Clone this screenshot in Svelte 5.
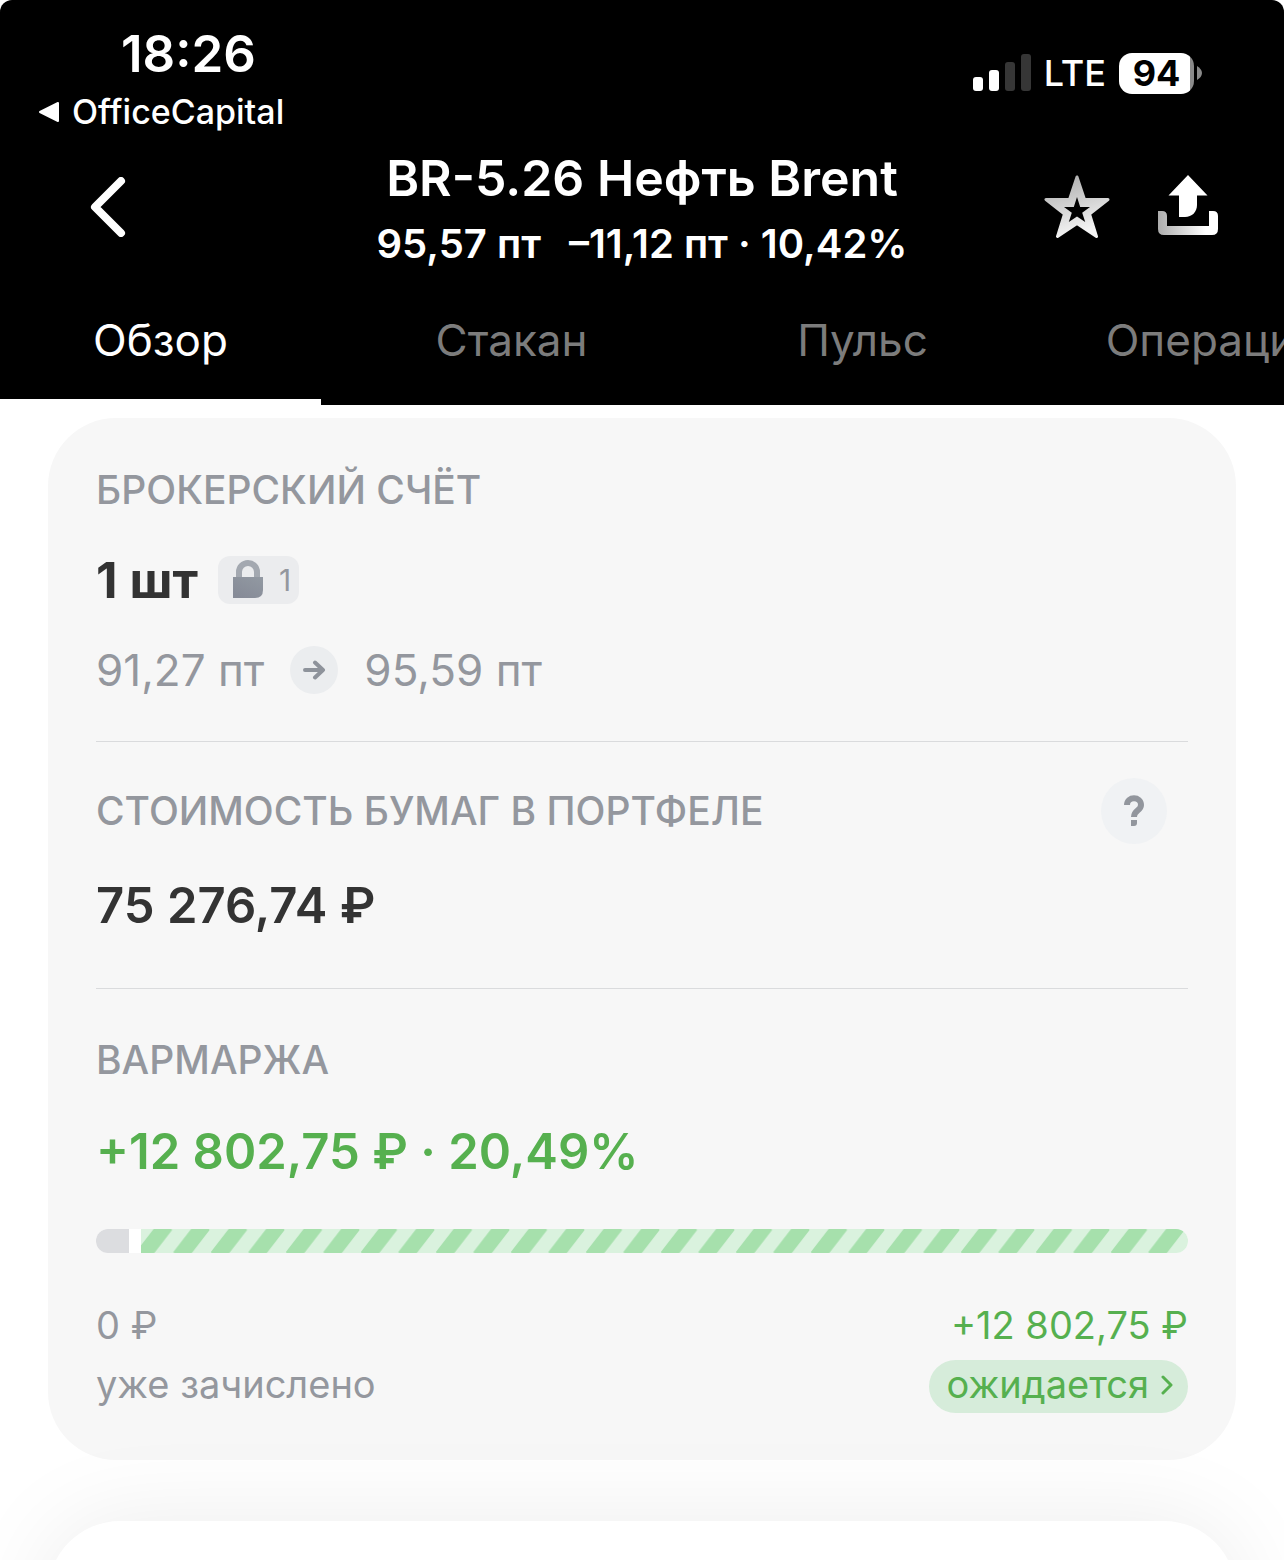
<script>
	let tabs = ["Обзор", "Стакан", "Пульс", "Операции"]
	let active = "Обзор"
	let favorite = false

	const position = {
		count: "1 шт",
		locked: 1,
		from: "91,27 пт",
		to: "95,59 пт",
		total: "75 276,74 ₽",
		margin: "+12 802,75 ₽ · 20,49%",
		credited: "0 ₽",
		expected: "+12 802,75 ₽",
		creditedShare: 3
	}
</script>

<div class="screen">
	<header>
		<div class="status">
			<div class="status-left">
				<div class="time">18:26</div>
				<a class="back-app" href="#app">
					<svg width="22" height="22" viewBox="0 0 22 22">
						<path d="M2 11 L20 2 V20 Z" fill="#fff" stroke="#fff" stroke-width="2" stroke-linejoin="round" />
					</svg>
					OfficeCapital
				</a>
			</div>
			<div class="status-right">
				<svg width="58" height="38" viewBox="0 0 58 38">
					<rect x="0" y="23" width="10" height="14" rx="3" fill="#fff" />
					<rect x="16" y="16" width="10" height="21" rx="3" fill="#fff" />
					<rect x="32" y="8" width="10" height="29" rx="3" fill="#363636" />
					<rect x="48" y="0" width="10" height="37" rx="3" fill="#363636" />
				</svg>
				<span class="lte">LTE</span>
				<div class="battery">
					<span class="level">94</span>
					<svg width="5" height="14" viewBox="0 0 5 14">
						<path d="M0 0 C3 2 5 4 5 7 C5 10 3 12 0 14 Z" fill="#8a8a8a" />
					</svg>
				</div>
			</div>
		</div>

		<div class="nav">
			<button class="icon-btn back" aria-label="Назад">
				<svg width="36" height="60" viewBox="0 0 36 60">
					<path d="M31 4 L5 30 L31 56" fill="none" stroke="#fff" stroke-width="8" stroke-linecap="round" stroke-linejoin="round" />
				</svg>
			</button>
			<div class="heading">
				<h1>BR-5.26 Нефть Brent</h1>
				<p><span>95,57 пт</span><span>–11,12 пт · 10,42%</span></p>
			</div>
			<div class="actions">
				<button class="icon-btn" aria-label="В избранное" aria-pressed={favorite} on:click={() => (favorite = !favorite)}>
					<svg width="66" height="64" viewBox="0 0 66 64">
						<defs>
							<linearGradient id="star" x1="0" y1="0" x2="0.3" y2="1">
								<stop offset="0" stop-color="#aaa" />
								<stop offset="1" stop-color="#f4f4f4" />
							</linearGradient>
						</defs>
						<path d="M33 2 L40.5 24.500 H64 L45.500 39 L52.500 61.500 L33 48.500 L13.500 61.500 L20.500 39 L2 24.500 H25.500 Z" fill="url(#star)" stroke="url(#star)" stroke-width="3" stroke-linejoin="round" />
						<path d="M33 22 L36.200 32 H46 L38.200 37.800 L41.200 47 L33 41.500 L24.800 47 L27.800 37.800 L20 32 H29.800 Z" fill="#000" />
					</svg>
				</button>
				<button class="icon-btn" aria-label="Поделиться">
					<svg width="60" height="60" viewBox="0 0 60 60">
						<defs>
							<linearGradient id="tray" x1="0" y1="0" x2="1" y2="0">
								<stop offset="0" stop-color="#adadad" />
								<stop offset="0.800" stop-color="#fff" />
							</linearGradient>
						</defs>
						<path d="M30 0 L49.500 20.500 H39 V30 C39 37 34 42 27 42 H21 V20.500 H10.500 Z" fill="#fff" />
						<path d="M0 36 H4 Q9 36 9 41 V51 H51 V36 H55 Q60 36 60 41 V54 Q60 60 54 60 H6 Q0 60 0 54 Z" fill="url(#tray)" />
					</svg>
				</button>
			</div>
		</div>

		<nav class="tabs">
			{#each tabs as tab}
				<button class:active={tab === active} on:click={() => (active = tab)}>{tab}</button>
			{/each}
		</nav>
	</header>

	<main>
		<div class="card">
			<section>
				<h2>БРОКЕРСКИЙ СЧЁТ</h2>
				<div class="count">
					<strong>{position.count}</strong>
					<span class="lock">
						<svg width="30" height="40" viewBox="0 0 30 40">
							<defs>
								<linearGradient id="lock" x1="1" y1="0" x2="0.300" y2="1">
									<stop offset="0" stop-color="#9299a2" />
									<stop offset="1" stop-color="#868b97" />
								</linearGradient>
							</defs>
							<path d="M6 19 V12 A9 9 0 0 1 24 12 V19" fill="none" stroke="#a3a8b0" stroke-width="6" />
							<path d="M0 17 H30 V30 Q30 38 22 38 H0 Z" fill="url(#lock)" />
						</svg>
						{position.locked}
					</span>
				</div>
				<div class="prices">
					<span>{position.from}</span>
					<span class="arrow">
						<svg width="24" height="20" viewBox="0 0 24 20">
							<path d="M3 10 H20 M13 2.500 L21 10 L13 17.500" fill="none" stroke="#8e939b" stroke-width="4" stroke-linecap="round" stroke-linejoin="round" />
						</svg>
					</span>
					<span>{position.to}</span>
				</div>
			</section>

			<section class="value">
				<div class="title-row">
					<h2>СТОИМОСТЬ БУМАГ В ПОРТФЕЛЕ</h2>
					<button class="help" aria-label="Справка">
						<svg width="20" height="32" viewBox="0 0 20 32">
							<path d="M3 10 C3 1 17 1 17 10 C17 16 10 15 10 22" fill="none" stroke="#92969d" stroke-width="6" />
							<path d="M7 25 H13 V28 Q13 31 10 31 H7 Z" fill="#92969d" />
						</svg>
					</button>
				</div>
				<div class="sum">{position.total}</div>
			</section>

			<section class="margin">
				<h2>ВАРМАРЖА</h2>
				<div class="sum green">{position.margin}</div>
				<div class="bar">
					<div class="credited" style="width: {position.creditedShare}%"></div>
					<svg class="expected" height="24">
						<defs>
							<pattern id="stripes" x="-5" width="37.500" height="24" patternUnits="userSpaceOnUse">
								<path d="M1 23 L18 1 H35 L18 23 Z" fill="#a6e0ac" stroke="#a6e0ac" stroke-width="2" stroke-linejoin="round" />
							</pattern>
						</defs>
						<rect width="100%" height="24" fill="#daf2de" />
						<rect width="100%" height="24" fill="url(#stripes)" />
					</svg>
				</div>
				<div class="totals">
					<div>
						<span>{position.credited}</span>
						<span class="note">уже зачислено</span>
					</div>
					<div class="right green">
						<span>{position.expected}</span>
						<button class="pill">
							ожидается
							<svg width="12" height="20" viewBox="0 0 12 20">
								<path d="M2 2 L10 10 L2 18" fill="none" stroke="#56b04f" stroke-width="3" stroke-linecap="round" stroke-linejoin="round" />
							</svg>
						</button>
					</div>
				</div>
			</section>
		</div>

		<div class="next-card"></div>
	</main>
</div>

<style>
:global(body) {
	background: #fff;
}
.screen {
	display: flex;
	flex-direction: column;
	height: 100vh;
	overflow: hidden;
	font-family: Inter, "Liberation Sans", sans-serif;
	font-size: 39px;
	line-height: 48px;
	color: #94979e;
}
h1, h2, p {
	margin: 0;
}
button {
	border: 0;
	padding: 0;
	background: none;
	font: inherit;
	color: inherit;
	cursor: pointer;
}
svg {
	display: block;
	flex: none;
}
header {
	flex: none;
	background: #000;
	color: #fff;
	border-radius: 12px 12px 0 0;
}
.status {
	display: flex;
	justify-content: space-between;
	align-items: flex-start;
	padding: 24px 82px 0 38px;
}
.time {
	padding-left: 83px;
	font-size: 51px;
	font-weight: 600;
	line-height: 60px;
}
.back-app {
	display: flex;
	align-items: center;
	gap: 12px;
	margin-top: 8px;
	font-size: 34px;
	font-weight: 500;
	line-height: 40px;
	color: #fff;
	text-decoration: none;
}
.status-right {
	display: flex;
	align-items: center;
	gap: 13px;
	padding-top: 25px;
}
.lte {
	font-size: 36px;
	font-weight: 500;
}
.battery {
	display: flex;
	align-items: center;
	gap: 3px;
}
.level {
	width: 75px;
	border-radius: 13px;
	background: linear-gradient(90deg, #fff 71px, #8a8a8a 71px);
	color: #000;
	font-size: 36px;
	font-weight: 700;
	line-height: 41px;
	text-align: center;
}
.nav {
	display: grid;
	grid-template-columns: 1fr auto 1fr;
	align-items: center;
	padding: 14px 66px 13px;
}
.back {
	justify-self: start;
	padding: 0 24px;
}
.heading {
	text-align: center;
}
h1 {
	font-size: 50px;
	font-weight: 600;
	line-height: 64px;
}
p {
	display: flex;
	justify-content: center;
	gap: 28px;
	margin-top: 10px;
	font-size: 40px;
	font-weight: 600;
}
.actions {
	display: flex;
	align-items: flex-start;
	justify-content: flex-end;
	gap: 48px;
}
.tabs {
	display: flex;
	gap: 30px;
	overflow: hidden;
}
.tabs button {
	flex: 0 0 25%;
	border-bottom: 6px solid transparent;
	font-size: 44px;
	line-height: 118px;
	color: #7c7c7c;
}
.tabs .active {
	border-color: #fff;
	color: #fff;
}
main {
	display: flex;
	flex: 1;
	flex-direction: column;
	gap: 61px;
	min-height: 0;
	padding: 13px 48px 0;
}
.card {
	flex: none;
	padding: 48px 48px 47px;
	border-radius: 68px;
	background: #f7f7f7;
}
section {
	padding-bottom: 47px;
	border-bottom: 1px solid #dadbdd;
}
h2 {
	font-size: 39px;
	font-weight: 500;
	line-height: 48px;
}
.count {
	display: flex;
	align-items: center;
	gap: 20px;
	margin: 34px 0;
	line-height: 64px;
}
.count strong {
	font-size: 50px;
	font-weight: 700;
	color: #333;
}
.lock {
	display: flex;
	align-items: center;
	gap: 16px;
	padding: 0 8px 0 15px;
	border-radius: 12px;
	background: #ebecee;
	font-size: 30px;
	line-height: 48px;
}
.prices {
	display: flex;
	gap: 26px;
	font-size: 44px;
}
.arrow {
	display: flex;
	align-items: center;
	justify-content: center;
	width: 48px;
	height: 48px;
	border-radius: 50%;
	background: #ebedef;
}
.value {
	padding: 36px 0 50px;
}
.title-row {
	display: flex;
	align-items: center;
	justify-content: space-between;
	margin-bottom: 30px;
}
.help {
	display: flex;
	align-items: center;
	justify-content: center;
	width: 66px;
	height: 66px;
	margin-right: 21px;
	border-radius: 50%;
	background: #f0f2f4;
}
.sum {
	font-size: 49px;
	font-weight: 600;
	line-height: 64px;
	color: #333;
}
.margin {
	padding: 47px 0 0;
	border: 0;
}
.margin .sum {
	margin: 36px 0 45px;
}
.sum.green, .green {
	color: #56b04f;
}
.bar {
	display: flex;
	gap: 12px;
	height: 24px;
	border-radius: 12px;
	overflow: hidden;
	background: #fff;
}
.credited {
	background: #dcdde0;
}
.expected {
	flex: 1;
	min-width: 0;
}
.totals {
	display: flex;
	justify-content: space-between;
	margin-top: 48px;
	font-size: 38px;
}
.totals > div {
	display: flex;
	flex-direction: column;
	gap: 11px;
}
.totals .right {
	align-items: flex-end;
}
.pill {
	display: flex;
	align-items: center;
	gap: 12px;
	padding: 0 15px 4px 18px;
	border-radius: 27px;
	background: #d6ecda;
	line-height: 49px;
}
.next-card {
	flex: none;
	height: 400px;
	border-radius: 72px 72px 0 0;
	background: #fff;
	box-shadow: 0 0 96px rgba(0, 0, 0, 0.08);
}
</style>
